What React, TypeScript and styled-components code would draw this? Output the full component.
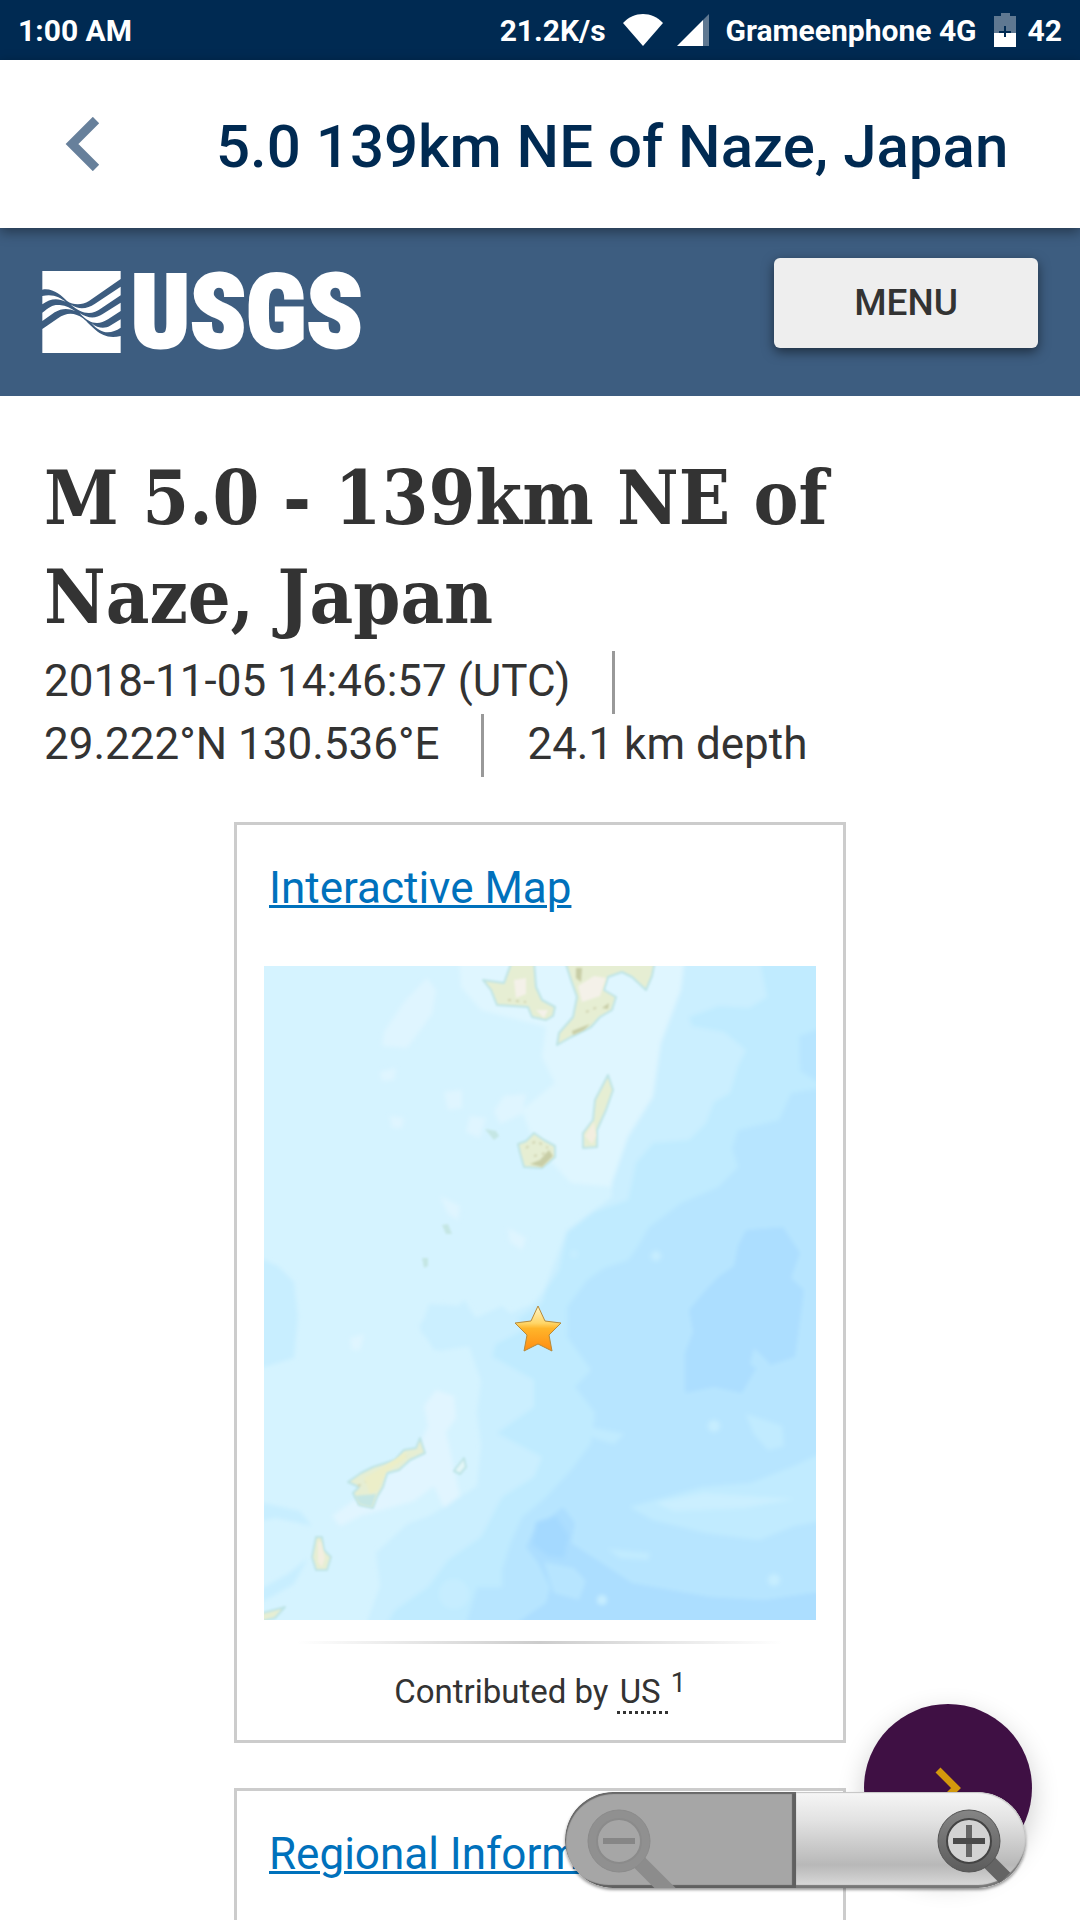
import React from 'react';
import styled, { createGlobalStyle } from 'styled-components';

const GlobalStyle = createGlobalStyle`
  *, *::before, *::after { box-sizing: border-box; }
  body { margin: 0; background: #fff; color: #333; font-family: Roboto, "Liberation Sans", sans-serif; }
  button { font-family: inherit; border: 0; padding: 0; cursor: pointer; }
  svg { display: block; flex: none; }
`;

const Screen = styled.div`
  position: relative;
  display: flex;
  flex-direction: column;
  height: 100vh;
  overflow: hidden;
`;

const StatusBar = styled.div`
  display: flex;
  align-items: center;
  justify-content: space-between;
  flex: none;
  height: 60px;
  padding: 0 18px;
  background: #002a52;
  color: #fff;
  font-size: 30px;
  font-weight: 700;
  white-space: nowrap;
`;

const StatusGroup = styled.div<{ $gap: number }>`
  display: flex;
  align-items: center;
  gap: ${p => p.$gap}px;
`;

const TitleBar = styled.header`
  position: relative;
  z-index: 1;
  display: flex;
  align-items: center;
  flex: none;
  height: 168px;
  background: #fff;
  box-shadow: 0 4px 12px rgba(0, 0, 0, 0.4);
`;

const BackButton = styled.button`
  display: flex;
  flex: none;
  width: 216px;
  padding: 20px 64px;
  background: none;
`;

const ScreenTitle = styled.div`
  padding-top: 4px;
  color: #002a52;
  font-size: 60px;
  font-weight: 500;
  white-space: nowrap;
`;

const SiteBar = styled.div`
  display: flex;
  align-items: flex-start;
  justify-content: space-between;
  flex: none;
  height: 168px;
  padding: 30px 42px;
  background: #3d5d80;
`;

const LogoLink = styled.a`
  display: flex;
  align-items: center;
  gap: 10px;
  height: 108px;
  color: #fff;
  font-family: "Roboto Condensed", Roboto, sans-serif;
  font-size: 102px;
  font-weight: 900;
  line-height: 108px;
  text-decoration: none;
  -webkit-text-stroke: 3px #fff;
`;

const MenuButton = styled.button`
  width: 264px;
  height: 90px;
  padding-bottom: 2px;
  border-radius: 6px;
  background: #eee;
  color: #333;
  font-size: 37px;
  font-weight: 500;
  box-shadow: 0 4px 12px rgba(0, 0, 0, 0.5);
`;

const Content = styled.main`
  flex: 1;
  min-height: 0;
  padding: 53px 44px 0;
`;

const Heading = styled.h1`
  margin: 0 0 4px;
  font-family: "DejaVu Serif Condensed", "DejaVu Serif", serif;
  font-size: 75px;
  font-weight: 700;
  line-height: 99px;
`;

const Facts = styled.ul`
  display: flex;
  flex-wrap: wrap;
  margin: 0 0 45px;
  padding: 0;
  list-style: none;
`;

const Fact = styled.li`
  margin-right: 43px;
  padding: 0 42px 3px 0;
  border-right: 3px solid #999;
  font-size: 44px;
  line-height: 60px;
  &:last-child { margin: 0; padding-right: 0; border: 0; }
`;

const Card = styled.section`
  width: 612px;
  max-width: 100%;
  margin: 0 auto 45px;
  padding: 32px 27px 24px;
  border: 3px solid #ccc;
`;

const CardLink = styled.a`
  display: block;
  width: max-content;
  margin: 0 0 46px 5px;
  color: #0071bc;
  font-size: 44px;
  line-height: 63px;
  text-decoration-thickness: 3px;
`;

const MapFrame = styled.div`
  svg { width: 100%; height: auto; }
`;

const Rule = styled.hr`
  height: 3px;
  margin: 21px 0 24px;
  border: 0;
  background: linear-gradient(90deg, transparent 6%, #ccc 50%, transparent 94%);
`;

const Credit = styled.p`
  margin: 0;
  font-size: 33px;
  line-height: 48px;
  text-align: center;
  abbr { padding: 0 7px 0 3px; border-bottom: 3px dotted #333; text-decoration: none; }
  sup { padding-left: 3px; font-size: 27px; line-height: 0; vertical-align: 11px; }
`;

const NextButton = styled.button`
  position: absolute;
  right: 48px;
  bottom: 48px;
  display: flex;
  align-items: center;
  justify-content: center;
  width: 168px;
  height: 168px;
  border-radius: 50%;
  background: #3f1044;
  box-shadow: 0 10px 28px rgba(0, 0, 0, 0.2);
`;

const ZoomBar = styled.div`
  position: absolute;
  right: 54px;
  bottom: 32px;
  display: flex;
  width: 461px;
  height: 96px;
  overflow: hidden;
  border-radius: 48px;
  box-shadow: 0 2px 3px rgba(0, 0, 0, 0.4);
`;

const ZoomButton = styled.button<{ $dim?: boolean }>`
  display: flex;
  flex: 1;
  justify-content: ${p => (p.$dim ? 'flex-start' : 'flex-end')};
  height: 96px;
  overflow: hidden;
  border-radius: ${p => (p.$dim ? '48px 0 0 48px' : '0 48px 48px 0')};
  background: ${p => (p.$dim ? '#a6a6a6' : 'linear-gradient(#f6f6f6, #e2e2e2 30%, #b8b8b8 76%, #dcdcdc)')};
  box-shadow: ${p => (p.$dim
    ? 'inset 1px 2px 1px #686868, inset -4px -3px 1px #606060'
    : 'inset -1px 1px 1px #c4c4c4, inset 0 -3px 1px #777')};
`;

const WifiIcon = () => (
  <svg width="40" height="32" viewBox="0 0 40 32"><path d="M0 9C11-3 29-3 40 9L20 32Z" fill="#fff" /></svg>
);

const SignalIcon = () => (
  <svg width="32" height="32" viewBox="0 0 32 32">
    <path d="M0 32L26 6V32Z" fill="#fff" />
    <path d="M26 6L32 0V32H26Z" fill="#5f7891" />
  </svg>
);

const BatteryIcon = () => (
  <svg width="22" height="34" viewBox="0 0 22 34">
    <path d="M0 3H7V0H16V3H22V20H0Z" fill="#5f7891" />
    <path d="M0 20H22V34H0Z" fill="#fff" />
    <path d="M11 13V24M5 19H17" stroke="#002a52" strokeWidth="2" />
  </svg>
);

const LogoMark = () => (
  <svg width="79" height="82" viewBox="38 48 235 246" fill="#fff">
    <path d="M38 48H273V72L178 138C155 152 130 150 112 138C95 122 70 98 38 104Z" />
    <path d="M38 123C70 115 92 128 108 140C85 128 60 130 38 148Z" />
    <path d="M122 148C150 168 175 160 195 147L273 95V121L215 160C185 183 155 177 122 148Z" />
    <path d="M38 173C60 155 70 148 90 150C110 152 125 160 137 169C115 158 95 160 75 172L38 198Z" />
    <path d="M150 174C175 192 200 190 218 178L273 143V168L235 193C205 212 180 207 150 174Z" />
    <path d="M185 204C205 222 228 220 240 213L273 193V218C245 237 215 240 185 204Z" />
    <path d="M38 222L85 190C110 172 135 172 160 190C190 215 215 258 273 243V294H38Z" />
  </svg>
);

const MapDrawing = () => (
  <svg viewBox="0 0 552 654" role="img" aria-label="Map of the epicenter">
    <defs>
      <linearGradient id="starFill" x1="0" y1="0" x2="0" y2="1">
        <stop offset="0" stopColor="#fff6c8" />
        <stop offset="0.38" stopColor="#ffd667" />
        <stop offset="0.5" stopColor="#ffb52a" />
        <stop offset="1" stopColor="#ff8c12" />
      </linearGradient>
      <filter id="soft" x="-5%" y="-5%" width="110%" height="110%"><feGaussianBlur stdDeviation="2" /></filter>
      <filter id="softLand" x="-5%" y="-5%" width="110%" height="110%"><feGaussianBlur stdDeviation="1" /></filter>
    </defs>
    <rect width="552" height="654" fill="#d5f3ff" />
    <g filter="url(#soft)">
      <path fill="#dff6ff" d="M195 -9L197 21 217 44 282 61 278 91 291 117 258 144 270 177 307 217 348 221 364 171 389 131 397 77 417 24 421 -9Z" />
      <path fill="#dff5ff" d="M163 12L172 24 168 48 143 82 118 80 120 66 140 36Z" />
      <path fill="#cbefff" d="M421 -9L417 24 397 77 389 131 364 171 348 217 348 231 303 264 280 324 270 337 241 350 205 352 200 340 165 338 156 365 175 385 205 380 217 415 213 447 217 480 213 520 180 541 165 550 143 558 112 587 116 620 100 664H562V-9Z" />
      <path fill="#c0ebff" d="M495 -9L503 31 485 42 455 40 425 51 428 60 460 66 482 84 474 100 466 127 450 136 442 157 425 174 389 177 372 197 368 216 364 234 330 246 303 267 295 304 282 324 278 337 258 350 225 370 229 391 270 414 270 441 233 467 278 491 270 511 238 531 217 571 184 594 164 621 131 644 119 664H562V-9Z" />
      <path fill="#b7e5ff" d="M562 121L527 127 515 154 474 164 468 182 474 201 454 221 417 237 385 261 374 280 364 294 340 302 323 314 303 341 303 371 327 404 311 421 331 447 327 477 307 504 282 531 258 551 246 578 238 604 238 621 213 621 200 664H562Z" />
      <path fill="#b7e5ff" d="M535 70L562 60V121L536 105Z" />
      <path fill="#acdeff" d="M482 264L519 261 536 287 527 312 540 324 537 347 531 391 491 404 478 427 450 421 421 427 421 387 429 366 425 344 440 326 454 311 470 300 474 280Z" />
      <path fill="#acdeff" d="M299 541L311 557 307 577 344 601 368 617 446 631 500 634 562 625V664H242L282 637 286 621 274 597 262 581 270 564Z" />
      <path fill="#a4d9ff" d="M272 556L292 550 305 570 300 592 284 590 268 578Z" />
      <path fill="#b7e5ff" d="M280 596L310 602 322 615 315 634 290 627Z" />
      <path fill="#c1ebff" d="M366 541L438 521 487 517 530 500 562 485V554L530 560 495 574 442 567 389 554Z" />
      <path fill="#cbefff" d="M392 537L440 527 530 533 480 542 410 545Z" />
      <path fill="#c1ebff" d="M482 448L518 460 520 480 504 484 490 468ZM344 583L386 587 384 594 356 592ZM320 460L360 468 350 478 330 472Z" />
      <path fill="#b7e5ff" d="M490 382L506 398 500 408 486 398Z" />
      <path fill="#c8eeff" d="M-9 290L14 300 30 316 34 350 30 392 -9 404ZM-9 535L36 545 48 560 12 552 -9 556ZM-9 626L24 608 44 592 30 618 -9 640Z" />
      <path fill="#cbefff" d="M238 340L263 362 232 378 225 400 208 380 170 384 155 360 168 342 190 346 200 334 212 352Z" />
      <path fill="#e1f5ff" d="M172 424L190 430 192 452 182 466 196 530 180 542 170 520 150 535 96 550 76 560 68 550 110 520 150 490 164 460 160 440Z" />
      <path fill="#dff5ff" d="M240 130L262 128 258 148 236 158 230 145ZM180 126L198 124 198 142 184 144ZM206 150L222 152 216 172 202 166ZM116 106L132 102 130 114 118 115ZM126 150L140 152 138 162 128 162ZM176 230L196 240 194 254 184 248ZM244 262L262 272 258 284 246 276ZM86 372L100 368 96 384 88 384Z" />
      <g fill="#c6edff"><circle cx="310" cy="288" r="4" /><circle cx="392" cy="290" r="5" /><circle cx="450" cy="460" r="6" /><circle cx="338" cy="634" r="5" /><circle cx="510" cy="614" r="6" /><circle cx="190" cy="628" r="15" /></g>
    </g>
    <g filter="url(#softLand)" fill="#e6eed3" stroke="#bde4e6" strokeWidth="2" strokeLinejoin="round">
      <path d="M248 -5H270L272 21 278 34 291 41 289 50 282 54 268 51 264 41 233 39 227 24 219 14 240 17Z" />
      <path d="M301 -5H391L388 10 382 24 368 11 358 6 344 11 340 24 352 31 348 44 336 51 327 61 307 71 293 79 295 67 309 51 313 31 307 14Z" />
      <path d="M344 109L349 124 342 144 333 164 333 181 319 182 319 167 329 154 331 134Z" />
      <path d="M270 167L280 174 291 180 291 191 278 202 260 201 256 187 254 178 262 175Z" />
      <path d="M156 472L161 487 146 494 135 504 123 507 119 521 113 531 109 542 95 539 89 527 95 521 84 516 97 507 109 501 131 494 140 484 152 482Z" />
      <path d="M52 571H58L60 584 67 591 63 604 52 604 48 591Z" />
      <path d="M-5 648L21 641 11 652 -5 656Z" />
      <path fill="#e3f6f7" d="M192 502L200 492 202 501 196 508 190 505Z" />
    </g>
    <g filter="url(#softLand)">
      <path fill="#f4f1e9" d="M314 20L330 10 342 12 336 30 318 36ZM250 14L262 12 262 28 252 32ZM272 44L284 44 280 52Z" />
      <path fill="#f3eee0" d="M321 170L330 156 332 170 328 178ZM54 575L57 576 61 592 58 601 54 596Z" />
      <path fill="#c8cda6" d="M266 198L276 194 285 184 289 190 278 201ZM312 2L318 2 317 16 312 12ZM338 42L345 37 344 43ZM308 65L326 58 320 64 309 69Z" />
      <path fill="none" stroke="#d0d3b0" strokeWidth="2" strokeDasharray="3 5" d="M262 182L272 175 284 182M270 190L282 187M322 46L336 40M244 34L262 36M94 520L124 503 142 490" />
      <path fill="#eceec8" d="M100 512L118 502 142 486 142 492 122 506 114 524 106 528Z" />
      <path fill="#c5e6e4" d="M90 530L112 528 108 541 96 538ZM221 163L232 165 235 170 230 174ZM178 259L184 258 188 268 182 268ZM158 292L164 292 164 300 160 302Z" />
    </g>
    <path d="M274 340L281 355 297 357 285 369 288 385 274 378 260 385 263 369 251 357 267 355Z" fill="url(#starFill)" stroke="#b58a3c" strokeWidth="1" strokeLinejoin="round" />
  </svg>
);

const Magnifier = ({ plus }: { plus?: boolean }) => {
  const ring = plus ? 'url(#ringFill)' : '#909090';
  return (
    <svg width="120" height="96" viewBox="0 0 120 96">
      <defs>
        <linearGradient id="ringFill" x1="0" y1="0" x2="0" y2="1">
          <stop offset="0" stopColor="#858585" />
          <stop offset="1" stopColor="#5c5c5c" />
        </linearGradient>
      </defs>
      <g transform={plus ? 'translate(63 49)' : 'translate(54 49)'}>
        <path d={plus ? 'M19 20L36 37' : 'M19 20L60 61'} stroke={plus ? '#646464' : '#8c8c8c'} strokeWidth="15" />
        <circle r="31" fill={ring} stroke={plus ? '#555' : '#8b8b8b'} strokeWidth="1" />
        <circle r="22" fill={plus ? '#d3d3d3' : '#a6a6a6'} stroke={plus ? '#444' : '#8b8b8b'} strokeWidth="2" />
        {plus && <path d="M0-16V16" stroke="#666" strokeWidth="6" />}
        <path d="M-16 0H16" stroke={plus ? '#4a4a4a' : '#868686'} strokeWidth="6" />
      </g>
    </svg>
  );
};

export default function App() {
  return (
    <Screen>
      <GlobalStyle />
      <StatusBar>
        <span>1:00 AM</span>
        <StatusGroup $gap={17}>
          <span>21.2K/s</span>
          <StatusGroup $gap={14}><WifiIcon /><SignalIcon /></StatusGroup>
          <span>Grameenphone 4G</span>
          <StatusGroup $gap={12}><BatteryIcon /><span>42</span></StatusGroup>
        </StatusGroup>
      </StatusBar>
      <TitleBar>
        <BackButton aria-label="Back">
          <svg width="36" height="54" viewBox="0 0 36 54">
            <path d="M32 3L8 27L32 51" fill="none" stroke="#67809b" strokeWidth="9" />
          </svg>
        </BackButton>
        <ScreenTitle>5.0 139km NE of Naze, Japan</ScreenTitle>
      </TitleBar>
      <SiteBar>
        <LogoLink href="#"><LogoMark />USGS</LogoLink>
        <MenuButton>MENU</MenuButton>
      </SiteBar>
      <Content>
        <Heading>M 5.0 - 139km NE of Naze, Japan</Heading>
        <Facts>
          <Fact>2018-11-05 14:46:57 (UTC)</Fact>
          <Fact>29.222°N 130.536°E</Fact>
          <Fact>24.1 km depth</Fact>
        </Facts>
        <Card>
          <CardLink href="#map">Interactive Map</CardLink>
          <MapFrame><MapDrawing /></MapFrame>
          <Rule />
          <Credit>Contributed by <abbr>US</abbr><sup>1</sup></Credit>
        </Card>
        <Card>
          <CardLink href="#region">Regional Information</CardLink>
        </Card>
      </Content>
      <NextButton aria-label="Next">
        <svg width="30" height="44" viewBox="0 0 30 44">
          <path d="M5 4L23 22L5 40" fill="none" stroke="#d3990d" strokeWidth="7" />
        </svg>
      </NextButton>
      <ZoomBar>
        <ZoomButton $dim aria-label="Zoom out"><Magnifier /></ZoomButton>
        <ZoomButton aria-label="Zoom in"><Magnifier plus /></ZoomButton>
      </ZoomBar>
    </Screen>
  );
}
